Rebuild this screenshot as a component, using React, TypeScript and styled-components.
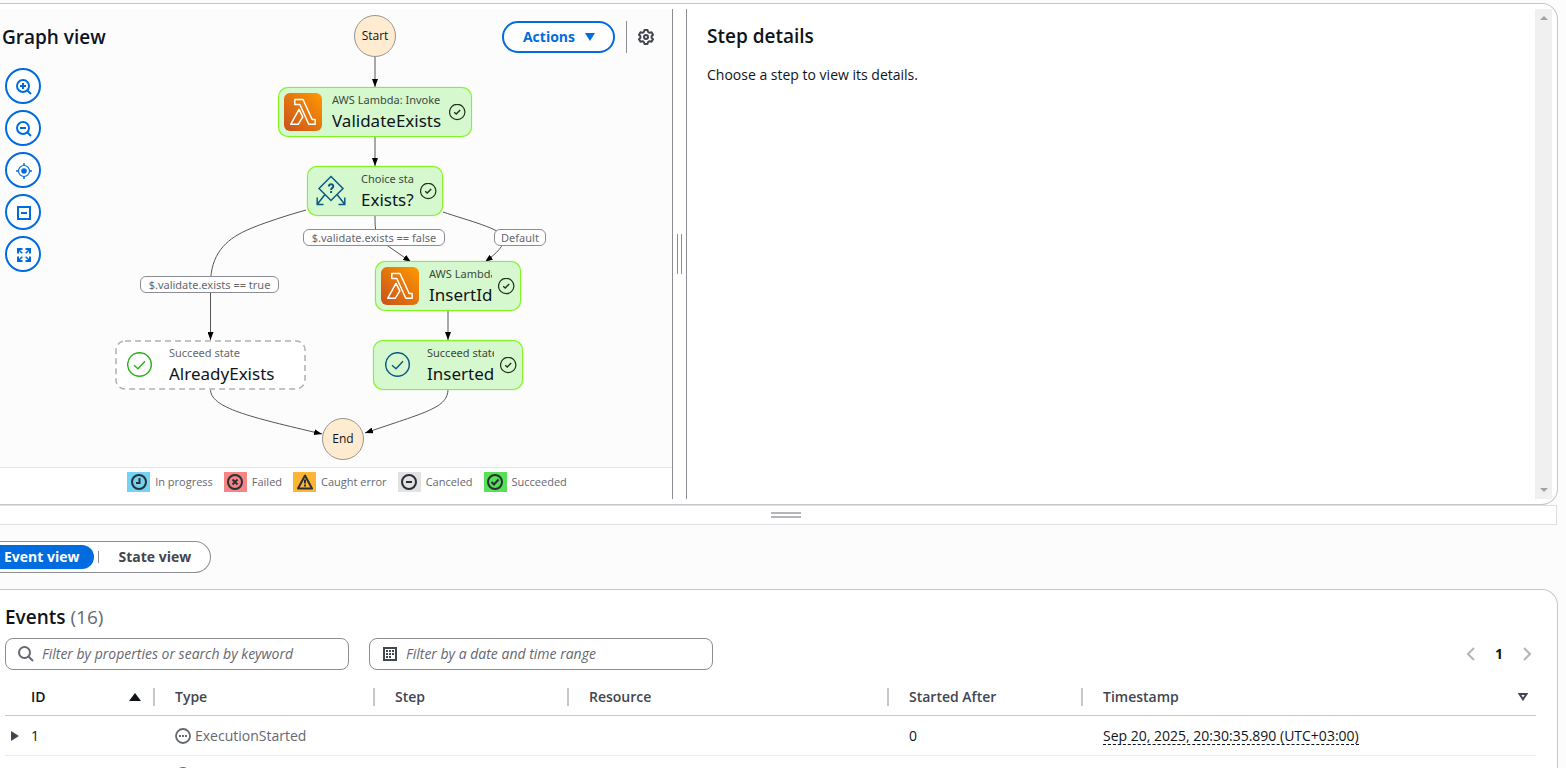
import React from 'react';
import styled, { createGlobalStyle, css } from 'styled-components';

const c = {
  page: '#fcfcfd',
  text: '#0f141a',
  heading: '#424650',
  muted: '#656871',
  blue: '#006ce0',
  line: '#c6c6cd',
  soft: '#ebebf0',
  control: '#8c8c94',
};

const GlobalStyle = createGlobalStyle`
  *, *::before, *::after { box-sizing: border-box; }
  body { margin: 0; background: ${c.page}; }
  button, input { font: inherit; color: inherit; }
  svg { display: block; flex: none; }
`;

const Page = styled.div`
  height: 100vh;
  overflow: hidden;
  padding: 3px 8px 0 0;
  color: ${c.text};
  font: 14px/20px 'Open Sans', 'Noto Sans', sans-serif;
`;

/* ---------- top split panel ---------- */

const SplitPanel = styled.section`
  display: grid;
  grid-template-columns: minmax(0, 673fr) 13px minmax(0, 866fr);
  padding: 5px 5px 5px 0;
  background: #fff;
  border: 1px solid ${c.line};
  border-left: 0;
  border-radius: 0 16px 16px 0;
`;

const GraphPane = styled.div`
  border-right: 1px solid ${c.control};
  display: flex;
  flex-direction: column;
`;

const Canvas = styled.div`
  position: relative;
  height: 459px;
  background: ${c.page};
  border-bottom: 1px solid #e4e4e8;
`;

const CanvasHeader = styled.header`
  display: flex;
  align-items: center;
  justify-content: space-between;
  padding: 12px 18px 0 2px;
`;

const Title = styled.h2`
  margin: 0;
  font-size: 19px;
  line-height: 24px;
  font-weight: 600;
`;

const HeaderActions = styled.div`
  display: flex;
  align-items: center;
  gap: 11px;
`;

const ActionsButton = styled.button`
  display: flex;
  align-items: center;
  gap: 10px;
  height: 32px;
  padding: 0 18px 0 19px;
  background: #fff;
  border: 2px solid ${c.blue};
  border-radius: 16px;
  color: ${c.blue};
  font-weight: 700;
`;

const HeaderRule = styled.span`
  width: 1px;
  height: 32px;
  background: ${c.control};
`;

const IconButton = styled.button`
  display: grid;
  place-items: center;
  padding: 0;
  background: none;
  border: 0;
  color: ${c.heading};
`;

const Tools = styled.div`
  display: flex;
  flex-direction: column;
  gap: 6px;
  padding: 15px 0 0 5px;
`;

const ToolButton = styled.button`
  display: grid;
  place-items: center;
  width: 36px;
  height: 36px;
  padding: 2px 0 0 2px;
  background: #fff;
  border: 2px solid ${c.blue};
  border-radius: 50%;
  color: ${c.blue};
`;

const Edges = styled.svg`
  position: absolute;
  left: 0;
  top: 0;
  pointer-events: none;
`;

type Box = { $x: number; $y: number; $w: number };

const placed = css<Box>`
  position: absolute;
  left: ${(p) => p.$x}px;
  top: ${(p) => p.$y}px;
  width: ${(p) => p.$w}px;
`;

const Terminal = styled.div<Box>`
  ${placed}
  height: 42px;
  display: grid;
  place-items: center;
  background: #ffebcf;
  border: 1px solid #9a9590;
  border-radius: 50%;
  font-size: 12px;
`;

const Node = styled.div<Box & { $done: boolean }>`
  ${placed}
  height: 50px;
  display: flex;
  align-items: center;
  padding: 0 6px;
  border-radius: 10px;
  background: ${(p) => (p.$done ? '#d6f8cf' : '#fff')};
  box-shadow: ${(p) => (p.$done ? 'inset 0 0 0 1px #82f520, 0 0 1px #82f520' : 'none')};
`;

const DashedFrame = styled.svg`
  position: absolute;
  inset: 0;
`;

const NodeIcon = styled.span`
  flex: none;
  width: 38px;
  display: grid;
  place-items: center;
`;

const NodeText = styled.div`
  flex: 1;
  min-width: 0;
  margin: 0 6px 0 10px;
  overflow: hidden;
  white-space: nowrap;
`;

const NodeKind = styled.div<{ $done: boolean }>`
  font-family: 'Noto Sans', sans-serif;
  font-size: 11px;
  line-height: 18px;
  color: ${(p) => (p.$done ? '#3a4a3c' : c.muted)};
`;

const NodeName = styled.div`
  font-family: 'Noto Sans', sans-serif;
  font-size: 17px;
  line-height: 24px;
`;

const EdgeLabel = styled.span<Box>`
  ${placed}
  height: 17px;
  background: #fff;
  border: 1px solid ${c.control};
  border-radius: 6px;
  color: ${c.muted};
  font-family: 'Noto Sans', sans-serif;
  font-size: 11px;
  line-height: 15px;
  text-align: center;
  white-space: nowrap;
`;

const Legend = styled.ul`
  display: flex;
  justify-content: center;
  gap: 11px;
  margin: 0;
  padding: 4px 0 7px 22px;
  list-style: none;
  color: ${c.muted};
  font-size: 11px;
  white-space: nowrap;
`;

const LegendItem = styled.li`
  display: flex;
  align-items: center;
  gap: 5px;
`;

const Swatch = styled.span<{ $color: string }>`
  display: grid;
  place-items: center;
  width: 23px;
  height: 20px;
  background: ${(p) => p.$color};
  color: #2b2f36;
`;

const ColumnGrip = styled.div`
  display: flex;
  align-items: center;
  justify-content: center;
  gap: 3px;
  &::before,
  &::after {
    content: '';
    width: 1px;
    height: 40px;
    background: ${c.control};
  }
`;

const DetailsPane = styled.div`
  display: flex;
  border-left: 1px solid ${c.control};
`;

const Details = styled.div`
  flex: 1;
  padding: 15px 20px;
`;

const DetailsText = styled.p`
  margin: 17px 0 0;
`;

const ScrollTrack = styled.div`
  display: flex;
  flex-direction: column;
  justify-content: space-between;
  align-items: center;
  width: 17px;
  padding: 7px 0;
  background: #f0f0f0;
  color: #a3a3a3;
`;

const RowGrip = styled.div`
  display: flex;
  flex-direction: column;
  align-items: center;
  justify-content: center;
  gap: 2px;
  height: 20px;
  margin-right: 1px;
  padding-left: 15px;
  background: #fff;
  border: 1px solid #dedee3;
  border-left: 0;
  &::before,
  &::after {
    content: '';
    width: 30px;
    height: 2px;
    background: #b4b4bb;
  }
`;

/* ---------- view switch ---------- */

const Segmented = styled.div`
  display: inline-flex;
  align-items: center;
  height: 32px;
  margin: 16px 0;
  padding-right: 4px;
  background: #fff;
  border: 1px solid ${c.control};
  border-left: 0;
  border-radius: 0 16px 16px 0;
  vertical-align: top;
`;

const Segment = styled.button<{ $on?: boolean }>`
  height: 24px;
  padding: 0 15px 0 ${(p) => (p.$on ? 4 : 19)}px;
  border: 0;
  border-radius: ${(p) => (p.$on ? '0 12px 12px 0' : '12px')};
  background: ${(p) => (p.$on ? c.blue : 'transparent')};
  color: ${(p) => (p.$on ? '#fff' : c.heading)};
  font-weight: 700;
`;

const SegmentRule = styled.span`
  width: 1px;
  height: 12px;
  margin-left: 4px;
  background: ${c.control};
`;

/* ---------- events ---------- */

const EventsPanel = styled.section`
  padding: 15px 21px 0 5px;
  background: #fff;
  border: 1px solid ${c.line};
  border-left: 0;
  border-bottom: 0;
  border-radius: 0 16px 0 0;
`;

const Count = styled.span`
  font-weight: 400;
  color: ${c.muted};
`;

const FilterRow = styled.div`
  display: flex;
  align-items: center;
  gap: 20px;
  margin-top: 9px;
`;

const field = css`
  display: flex;
  align-items: center;
  gap: 8px;
  width: 344px;
  height: 32px;
  padding: 0 12px;
  background: #fff;
  border: 1px solid ${c.control};
  border-radius: 8px;
  color: ${c.muted};
`;

const SearchField = styled.label`
  ${field}
`;

const SearchInput = styled.input`
  flex: 1;
  min-width: 0;
  padding: 0;
  border: 0;
  outline: 0;
  background: none;
  &::placeholder {
    color: ${c.muted};
    font-style: italic;
    opacity: 1;
  }
`;

const DateButton = styled.button`
  ${field}
  font-style: italic;
`;

const Pager = styled.nav`
  display: flex;
  align-items: center;
  gap: 16px;
  margin-left: auto;
  padding-right: 1px;
`;

const PagerButton = styled(IconButton)`
  color: #b4b4bb;
`;

const PageNumber = styled.button`
  padding: 0;
  border: 0;
  background: none;
  font-weight: 700;
`;

const Table = styled.table`
  width: 100%;
  margin-top: 8px;
  border-collapse: separate;
  border-spacing: 0;
  table-layout: fixed;
  text-align: left;
`;

const Th = styled.th<{ $w?: number; $first?: boolean }>`
  width: ${(p) => (p.$w ? `${p.$w}px` : 'auto')};
  height: 38px;
  padding: 0 0 0 ${(p) => (p.$first ? 26 : 20)}px;
  border-bottom: 1px solid ${c.line};
  color: ${(p) => (p.$first ? c.text : c.heading)};
  font-weight: 600;
`;

const ThInner = styled.div<{ $rule?: boolean }>`
  display: flex;
  align-items: center;
  justify-content: space-between;
  height: 18px;
  padding-right: ${(p) => (p.$rule ? 12 : 8)}px;
  border-right: ${(p) => (p.$rule ? `2px solid ${c.line}` : '0')};
`;

const Td = styled.td<{ $first?: boolean; $short?: boolean }>`
  height: ${(p) => (p.$short ? 38 : 40)}px;
  padding: 0 0 0 ${(p) => (p.$first ? 6 : 20)}px;
  border-bottom: 1px solid ${c.soft};
`;

const CellRow = styled.div<{ $gap: number; $muted?: boolean }>`
  display: flex;
  align-items: center;
  gap: ${(p) => p.$gap}px;
  color: ${(p) => (p.$muted ? c.muted : 'inherit')};
`;

const Stamp = styled.span`
  border-bottom: 1px dashed ${c.text};
  line-height: 16px;
  display: inline-block;
`;

/* ---------- icons ---------- */

const stroke = { fill: 'none', stroke: 'currentColor' } as const;

const Lambda = () => (
  <svg width="38" height="38" viewBox="0 0 38 38">
    <defs>
      <linearGradient id="lambda" x1="0" y1="1" x2="1" y2="0">
        <stop offset="0" stopColor="#c8511b" />
        <stop offset="1" stopColor="#f90" />
      </linearGradient>
    </defs>
    <rect width="38" height="38" rx="6" fill="url(#lambda)" />
    <path
      d="M10.800 6.500H19L28.200 26.500H31.200V31.200H24.800L15.800 11.500H10.800zM6.700 31.300L15 16.300L18.800 23.800L14.200 31.300z"
      fill="none"
      stroke="#fff"
      strokeWidth="1.500"
      strokeLinejoin="round"
    />
  </svg>
);

const Choice = () => (
  <svg width="32" height="32" viewBox="0 0 32 32" {...stroke} color="#0b5a85" strokeWidth="1.5">
    <path d="M15 1.500 27 13.500 15 25.500 3 13.500z" />
    <path d="M9 19.500L1.500 29M21 19.500L28.500 29M1.200 22.500V29.500H7.500M28.800 22.500V29.500H22.500" />
    <path d="M12.800 11.500c0-3 4.500-3 4.500-.3 0 1.700-2.200 1.700-2.200 3.800M15.100 16v2" strokeWidth="2" />
  </svg>
);

const Succeed = ({ color }: { color: string }) => (
  <svg width="26" height="26" viewBox="0 0 26 26" {...stroke} color={color} strokeWidth="1.5">
    <circle cx="12.500" cy="12.500" r="11.800" />
    <path d="M7 13.200l4 3.500 7-7.500" />
  </svg>
);

const Check = () => (
  <svg width="17" height="17" viewBox="0 0 17 17" {...stroke} color="#22301f" strokeWidth="1.2">
    <circle cx="8.200" cy="8" r="7.700" />
    <path d="M5.200 8.300l2 1.800 4-4" strokeWidth="1.400" />
  </svg>
);

const ToolIcon = ({ children }: { children: React.ReactNode }) => (
  <svg width="16" height="16" viewBox="0 0 16 16" {...stroke} strokeWidth="2">
    {children}
  </svg>
);

const Triangle = ({ dir, w, h }: { dir: 'up' | 'down' | 'right'; w: number; h: number }) => {
  const d = {
    up: `M0 ${h}L${w / 2} 0L${w} ${h}z`,
    down: `M0 0H${w}L${w / 2} ${h}z`,
    right: `M0 0L${w} ${h / 2}L0 ${h}z`,
  }[dir];
  return (
    <svg width={w} height={h} viewBox={`0 0 ${w} ${h}`} fill="currentColor">
      <path d={d} />
    </svg>
  );
};

const Gear = () => (
  <svg width="16" height="16" viewBox="0 0 16 16" {...stroke} strokeWidth="2" strokeLinejoin="round">
    <path d="M6.500 1h3l.6 2 1.400.8 2-.5 1.500 2.500L13.600 7.300v1.400L15 10.200l-1.500 2.500-2-.5-1.400.8-.6 2h-3l-.6-2-1.400-.8-2 .5L1 10.200l1.400-1.500V7.300L1 5.800l1.500-2.500 2 .5L5.900 3z" />
    <circle cx="8" cy="8" r="2" />
  </svg>
);

const Pending = () => (
  <svg width="16" height="16" viewBox="0 0 16 16" {...stroke} strokeWidth="1.800">
    <circle cx="8" cy="8" r="7" />
    <path d="M4 8h2M7 8h2M10 8h2" />
  </svg>
);

const legend: { label: string; color: string; art: React.ReactNode }[] = [
  {
    label: 'In progress',
    color: '#74d2f2',
    art: (
      <>
        <circle cx="8" cy="8" r="7" />
        <path d="M8.500 4v5H5" />
      </>
    ),
  },
  {
    label: 'Failed',
    color: '#f58484',
    art: (
      <>
        <circle cx="8" cy="8" r="7" />
        <path d="M5.500 5.500l5 5M10.500 5.500l-5 5" />
      </>
    ),
  },
  {
    label: 'Caught error',
    color: '#ffb534',
    art: (
      <>
        <path d="M8 1.500 15 14.500H1z" strokeLinejoin="round" />
        <path d="M8 5.500v4M8 10.500v2" />
      </>
    ),
  },
  {
    label: 'Canceled',
    color: '#e2e2e2',
    art: (
      <>
        <circle cx="8" cy="8" r="7" />
        <path d="M5 8h6" />
      </>
    ),
  },
  {
    label: 'Succeeded',
    color: '#55e056',
    art: (
      <>
        <circle cx="8" cy="8" r="7" />
        <path d="M4.500 8l2.500 2.500 4.500-5" />
      </>
    ),
  },
];

const nodes = [
  { x: 278, y: 78, w: 194, kind: 'AWS Lambda: Invoke', name: 'ValidateExists', icon: <Lambda />, done: true },
  { x: 307, y: 157, w: 136, kind: 'Choice state', name: 'Exists?', icon: <Choice />, done: true },
  { x: 375, y: 252, w: 146, kind: 'AWS Lambda: Invoke', name: 'InsertId', icon: <Lambda />, done: true },
  { x: 115, y: 331, w: 191, kind: 'Succeed state', name: 'AlreadyExists', icon: <Succeed color="#2eb01f" />, done: false },
  { x: 373, y: 331, w: 150, kind: 'Succeed state', name: 'Inserted', icon: <Succeed color="#0b5a85" />, done: true },
];

const edges = [
  'M375 57V87',
  'M375 137V166',
  'M306 210C292 214 262 223 245 231C226 240 210.500 254 210.500 284V340',
  'M375 215C375 234 376 239 388 246L411 262',
  'M443 212C466 220 503 229 504 238C504 246 498 252 485 262',
  'M448 311V340',
  'M210.500 389C210 408 250 417 322 434',
  'M448 389C448 408 426 412 365 433',
];

const columns = [
  { label: 'ID', w: 150, sort: 'up' },
  { label: 'Type', w: 220 },
  { label: 'Step', w: 194 },
  { label: 'Resource', w: 320 },
  { label: 'Started After', w: 194 },
  { label: 'Timestamp', sort: 'open' },
];

export default function App() {
  return (
    <Page>
      <GlobalStyle />
      <SplitPanel>
        <GraphPane>
          <Canvas>
            <Edges width="672" height="458" viewBox="0 9 672 458">
              <defs>
                <marker id="tip" markerWidth="8" markerHeight="6" refX="8" refY="3" orient="auto" markerUnits="userSpaceOnUse">
                  <path d="M0 0L8 3L0 6z" fill="#000" />
                </marker>
              </defs>
              {edges.map((d) => (
                <path key={d} d={d} fill="none" stroke="#555" markerEnd="url(#tip)" />
              ))}
            </Edges>
            <Terminal $x={354} $y={6} $w={42}>Start</Terminal>
            {nodes.map((n) => (
              <Node key={n.name} $x={n.x} $y={n.y} $w={n.w} $done={n.done}>
                {!n.done && (
                  <DashedFrame width={n.w} height="50">
                    <rect x="1" y="1" width={n.w - 2} height="48" rx="9" fill="none" stroke="#b0b0b3" strokeWidth="1.500" strokeDasharray="6 4" />
                  </DashedFrame>
                )}
                <NodeIcon>{n.icon}</NodeIcon>
                <NodeText>
                  <NodeKind $done={n.done}>{n.kind}</NodeKind>
                  <NodeName>{n.name}</NodeName>
                </NodeText>
                {n.done && <Check />}
              </Node>
            ))}
            <Terminal $x={322} $y={409} $w={42}>End</Terminal>
            <EdgeLabel $x={303} $y={220} $w={142}>$.validate.exists == false</EdgeLabel>
            <EdgeLabel $x={494} $y={220} $w={52}>Default</EdgeLabel>
            <EdgeLabel $x={140} $y={267} $w={139}>$.validate.exists == true</EdgeLabel>
            <CanvasHeader>
              <Title>Graph view</Title>
              <HeaderActions>
                <ActionsButton type="button">
                  Actions
                  <Triangle dir="down" w={10} h={8} />
                </ActionsButton>
                <HeaderRule />
                <IconButton type="button" aria-label="Settings">
                  <Gear />
                </IconButton>
              </HeaderActions>
            </CanvasHeader>
            <Tools>
              <ToolButton type="button" aria-label="Zoom in">
                <ToolIcon>
                  <circle cx="7" cy="7" r="6" />
                  <path d="M11 11l4 4M4 7h6M7 4v6" />
                </ToolIcon>
              </ToolButton>
              <ToolButton type="button" aria-label="Zoom out">
                <ToolIcon>
                  <circle cx="7" cy="7" r="6" />
                  <path d="M11 11l4 4M4 7h6" />
                </ToolIcon>
              </ToolButton>
              <ToolButton type="button" aria-label="Center graph">
                <ToolIcon>
                  <circle cx="8" cy="8" r="5.500" strokeWidth="1.200" />
                  <circle cx="8" cy="8" r="2.800" fill="currentColor" stroke="none" />
                  <path d="M8 0v3M8 13v3M0 8h3M13 8h3" strokeWidth="1.500" />
                </ToolIcon>
              </ToolButton>
              <ToolButton type="button" aria-label="Collapse">
                <ToolIcon>
                  <path d="M2 2h12v12H2zM5 8h6" />
                </ToolIcon>
              </ToolButton>
              <ToolButton type="button" aria-label="Full screen">
                <ToolIcon>
                  <path d="M2 6.500V2h4.500M9.500 2H14v4.500M14 9.500V14H9.500M6.500 14H2V9.500" />
                  <path d="M2 2l4.300 4.300M14 2L9.700 6.300M14 14L9.700 9.700M2 14l4.300-4.300" strokeWidth="1.600" />
                </ToolIcon>
              </ToolButton>
            </Tools>
          </Canvas>
          <Legend>
            {legend.map((l) => (
              <LegendItem key={l.label}>
                <Swatch $color={l.color}>
                  <ToolIcon>{l.art}</ToolIcon>
                </Swatch>
                {l.label}
              </LegendItem>
            ))}
          </Legend>
        </GraphPane>
        <ColumnGrip />
        <DetailsPane>
          <Details>
            <Title>Step details</Title>
            <DetailsText>Choose a step to view its details.</DetailsText>
          </Details>
          <ScrollTrack>
            <Triangle dir="up" w={8} h={4} />
            <Triangle dir="down" w={8} h={4} />
          </ScrollTrack>
        </DetailsPane>
      </SplitPanel>
      <RowGrip />

      <Segmented>
        <Segment type="button" $on>Event view</Segment>
        <SegmentRule />
        <Segment type="button">State view</Segment>
      </Segmented>

      <EventsPanel>
        <Title>
          Events <Count>(16)</Count>
        </Title>
        <FilterRow>
          <SearchField>
            <svg width="16" height="16" viewBox="0 0 16 16" {...stroke} strokeWidth="2">
              <circle cx="6.500" cy="6.500" r="5.500" />
              <path d="M10.500 10.500l4.500 4.500" />
            </svg>
            <SearchInput type="text" aria-label="Filter events" placeholder="Filter by properties or search by keyword" />
          </SearchField>
          <DateButton type="button">
            <svg width="16" height="16" viewBox="0 0 16 16" {...stroke} color={c.heading}>
              <path d="M2 2h12v12H2z" strokeWidth="2" />
              <path d="M4 5h8M4 8h8M4 11h5" strokeWidth="2" strokeDasharray="2 1" />
            </svg>
            Filter by a date and time range
          </DateButton>
          <Pager aria-label="Pagination">
            <PagerButton type="button" aria-label="Previous page">
              <svg width="16" height="16" viewBox="0 0 16 16" {...stroke} strokeWidth="2">
                <path d="M11 2L5 8l6 6" />
              </svg>
            </PagerButton>
            <PageNumber type="button">1</PageNumber>
            <PagerButton type="button" aria-label="Next page">
              <svg width="16" height="16" viewBox="0 0 16 16" {...stroke} strokeWidth="2">
                <path d="M5 2l6 6-6 6" />
              </svg>
            </PagerButton>
          </Pager>
        </FilterRow>
        <Table>
          <thead>
            <tr>
              {columns.map((col, i) => (
                <Th key={col.label} $w={col.w} $first={i === 0}>
                  <ThInner $rule={!!col.w}>
                    {col.label}
                    {col.sort === 'up' && <Triangle dir="up" w={12} h={8} />}
                    {col.sort === 'open' && (
                      <svg width="10" height="8" viewBox="0 0 10 8" {...stroke} strokeWidth="2">
                        <path d="M1.500 1h7L5 6.300z" />
                      </svg>
                    )}
                  </ThInner>
                </Th>
              ))}
            </tr>
          </thead>
          <tbody>
            <tr>
              <Td $first>
                <CellRow $gap={12}>
                  <IconButton type="button" aria-label="Expand event 1">
                    <Triangle dir="right" w={8} h={10} />
                  </IconButton>
                  1
                </CellRow>
              </Td>
              <Td>
                <CellRow $gap={4} $muted>
                  <Pending />
                  ExecutionStarted
                </CellRow>
              </Td>
              <Td />
              <Td />
              <Td>0</Td>
              <Td>
                <Stamp>Sep 20, 2025, 20:30:35.890 (UTC+03:00)</Stamp>
              </Td>
            </tr>
            <tr>
              <Td $first $short />
              <Td $short>
                <CellRow $gap={4} $muted>
                  <Pending />
                </CellRow>
              </Td>
              <Td $short />
              <Td $short />
              <Td $short />
              <Td $short />
            </tr>
          </tbody>
        </Table>
      </EventsPanel>
    </Page>
  );
}
